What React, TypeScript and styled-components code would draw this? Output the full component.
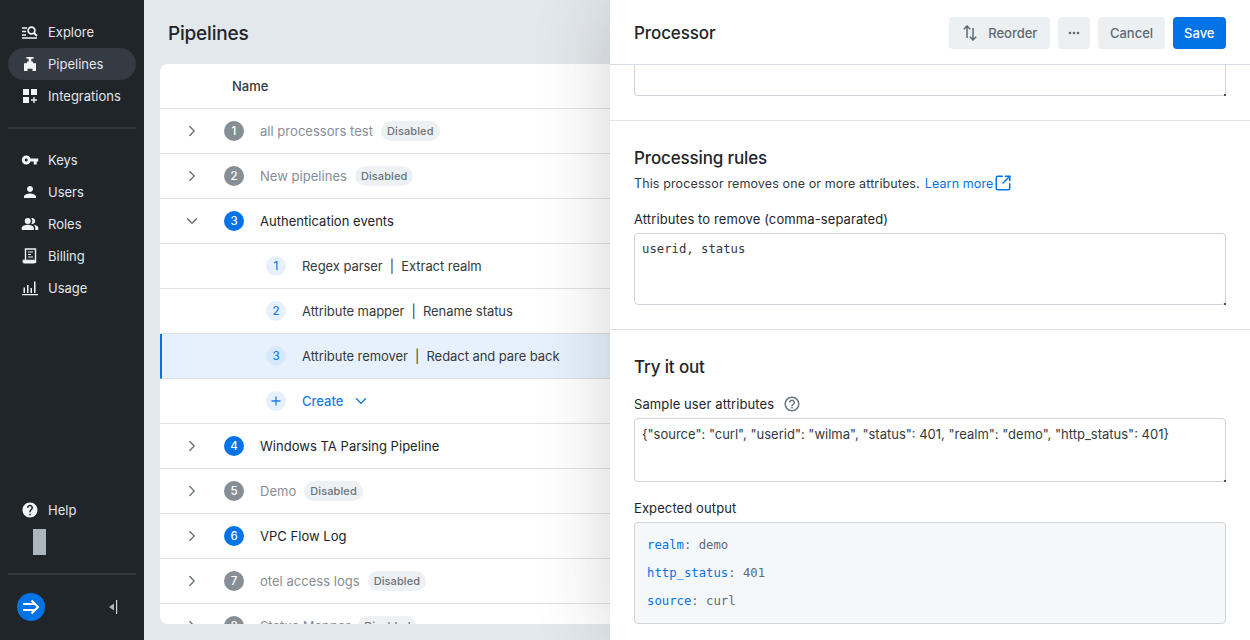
import React from "react";
import styled, { createGlobalStyle } from "styled-components";
import { ChevronDown, ChevronRight, Plus, SquareArrowOutUpRight } from "lucide-react";
import { MdHelp, MdHelpOutline, MdPeopleAlt, MdPerson, MdVpnKey } from "react-icons/md";

const GlobalStyle = createGlobalStyle`
  html, body {
    margin: 0;
    height: 640px;
    overflow: hidden;
    font-family: Inter, "Liberation Sans", sans-serif;
    -webkit-font-smoothing: antialiased;
  }
  * { box-sizing: border-box; }
`;

const Page = styled.div`
  display: flex;
  position: relative;
  width: 1250px;
  height: 640px;
  overflow: hidden;
  background: #e3e8ec;
`;

/* sidebar */
const Sidebar = styled.nav`
  display: flex;
  flex-direction: column;
  flex: 0 0 144px;
  padding: 16px 8px 0;
  background: #202529;
`;

const NavGroup = styled.div`
  display: flex;
  flex-direction: column;
`;

const NavItem = styled.div<{ $active?: boolean }>`
  display: flex;
  align-items: center;
  gap: 9px;
  height: 32px;
  padding-left: 13px;
  border-radius: 16px;
  font-size: 13px;
  color: #e3e6e9;
  background: ${(p) => (p.$active ? "#343b42" : "transparent")};
  svg {
    flex: 0 0 18px;
    width: 18px;
    height: 18px;
    color: #f1f3f5;
  }
`;

const NavDivider = styled.div`
  height: 2px;
  margin: 15px 0;
  background: #32383e;
`;

const Spacer = styled.div`
  flex: 1;
`;

const RedactedBlock = styled.div`
  width: 13px;
  height: 26px;
  margin: 3px 0 3px 25px;
  background: #adb5bd;
`;

const SidebarFooter = styled.div`
  display: flex;
  align-items: center;
  justify-content: space-between;
  height: 34px;
  margin-bottom: 16px;
  padding: 0 18px 0 9px;
`;

const LogoBadge = styled.div`
  display: flex;
  align-items: center;
  justify-content: center;
  width: 28px;
  height: 28px;
  border-radius: 50%;
  background: #0073e6;
`;

/* pipelines list */
const Main = styled.main`
  display: flex;
  flex-direction: column;
  flex: 1;
  min-width: 0;
  padding: 0 0 16px 16px;
`;

const PageTitle = styled.h1`
  display: flex;
  align-items: center;
  height: 64px;
  margin: 0;
  padding: 2px 0 0 8px;
  font-size: 19px;
  font-weight: 500;
  letter-spacing: -0.2px;
  color: #212529;
`;

const TableCard = styled.div`
  flex: 1;
  overflow: hidden;
  border-radius: 8px 0 0 8px;
  background: #fff;
`;

const HeaderRow = styled.div`
  display: flex;
  align-items: center;
  height: 45px;
  padding-left: 72px;
  border-bottom: 1px solid #dee2e9;
  font-size: 13px;
  font-weight: 500;
  color: #343a40;
`;

const Row = styled.div<{ $selected?: boolean }>`
  display: flex;
  align-items: center;
  height: 45px;
  padding-left: ${(p) => (p.$selected ? "18px" : "20px")};
  border-bottom: 1px solid #dee2e6;
  border-left: ${(p) => (p.$selected ? "2px solid #0073e6" : "0")};
  background: ${(p) => (p.$selected ? "#e7f1fd" : "#fff")};
`;

const ExpandSlot = styled.div`
  display: flex;
  align-items: center;
  justify-content: center;
  flex: 0 0 24px;
  margin-right: 20px;
  color: #6a737c;
  svg {
    width: 18px;
    height: 18px;
  }
`;

const OrderBadge = styled.div<{ $enabled: boolean }>`
  display: flex;
  align-items: center;
  justify-content: center;
  flex: 0 0 20px;
  height: 20px;
  margin-right: 16px;
  border-radius: 50%;
  font-size: 11.5px;
  font-weight: 500;
  color: #fff;
  background: ${(p) => (p.$enabled ? "#0073e6" : "#868e96")};
`;

const ChildBadge = styled.div`
  display: flex;
  align-items: center;
  justify-content: center;
  flex: 0 0 20px;
  height: 20px;
  margin: 0 16px 0 86px;
  border-radius: 50%;
  font-size: 11.5px;
  font-weight: 500;
  color: #1c7de8;
  background: #e7f1fd;
  svg {
    width: 14px;
    height: 14px;
  }
`;

const SelectedBadge = styled(ChildBadge)`
  background: #d7e8fc;
`;

const RowName = styled.span<{ $muted?: boolean }>`
  font-size: 13px;
  letter-spacing: 0.03px;
  white-space: nowrap;
  color: ${(p) => (p.$muted ? "#868e96" : "#212529")};
`;

const ChildName = styled(RowName)`
  letter-spacing: -0.06px;
  color: #343a40;
`;

const DisabledTag = styled.span`
  display: inline-flex;
  align-items: center;
  height: 20px;
  margin-left: 8px;
  padding: 0 6px;
  border-radius: 10px;
  font-size: 11px;
  font-weight: 500;
  letter-spacing: 0.1px;
  color: #6a737c;
  background: #eef1f4;
`;

const CreateLink = styled.span`
  display: inline-flex;
  align-items: center;
  gap: 9px;
  font-size: 13px;
  font-weight: 500;
  color: #1c7de8;
  svg {
    width: 18px;
    height: 18px;
  }
`;

/* processor drawer, lies over the table */
const Drawer = styled.aside`
  position: absolute;
  top: 0;
  right: 0;
  bottom: 0;
  display: flex;
  flex-direction: column;
  width: 640px;
  background: #fff;
  box-shadow: 0 0 72px rgba(33, 37, 41, 0.2);
`;

const DrawerHeader = styled.header`
  display: flex;
  align-items: center;
  flex: 0 0 65px;
  gap: 8px;
  padding: 1px 24px 0;
  border-bottom: 1px solid #d6dde6;
`;

const DrawerTitle = styled.h2`
  flex: 1;
  margin: 0;
  font-size: 17px;
  font-weight: 500;
  letter-spacing: -0.1px;
  color: #212529;
`;

const Button = styled.button<{ $primary?: boolean }>`
  display: inline-flex;
  align-items: center;
  justify-content: center;
  height: 32px;
  padding: 0 11.5px;
  border: 0;
  border-radius: 4px;
  font-family: inherit;
  font-size: 13px;
  font-weight: 500;
  color: ${(p) => (p.$primary ? "#fff" : "#5f6a74")};
  background: ${(p) => (p.$primary ? "#0073e6" : "#edf0f3")};
`;

const ReorderButton = styled(Button)`
  gap: 11px;
  padding: 0 13px 0 14px;
`;

const IconButton = styled(Button)`
  width: 32px;
  padding: 0;
`;

const ClippedField = styled.div`
  position: relative;
  flex: 0 0 31px;
  margin: 0 24px 24px;
  border: 1px solid #ced4da;
  border-top: 0;
  border-radius: 0 0 4px 4px;
`;

const Section = styled.section`
  display: flex;
  flex-direction: column;
  padding: 24px;
  border-top: 1px solid #dee2e6;
`;

const SectionTitle = styled.h3`
  margin: 0;
  font-size: 17px;
  line-height: 26px;
  font-weight: 500;
  letter-spacing: -0.14px;
  color: #212529;
`;

const SectionText = styled.p`
  display: flex;
  align-items: center;
  height: 20px;
  margin: 2px 0 0;
  font-size: 12.5px;
  letter-spacing: 0.12px;
  color: #343a40;
`;

const TextLink = styled.a`
  display: inline-flex;
  align-items: center;
  gap: 1px;
  margin-left: 5px;
  color: #0073e6;
  svg {
    width: 18px;
    height: 18px;
  }
`;

const FieldLabel = styled.label<{ $top: number }>`
  display: flex;
  align-items: center;
  gap: 9px;
  height: 20px;
  margin: ${(p) => p.$top}px 0 4px;
  font-size: 13px;
  font-weight: 400;
  letter-spacing: 0.1px;
  color: #212529;
  svg {
    width: 18px;
    height: 18px;
    color: #6a737c;
  }
`;

const TextBox = styled.div<{ $height: number; $mono?: boolean }>`
  position: relative;
  height: ${(p) => p.$height}px;
  padding: 6px 7px;
  border: 1px solid #ced4da;
  border-radius: 4px;
  font-family: ${(p) => (p.$mono ? '"DejaVu Sans Mono", monospace' : "inherit")};
  font-size: ${(p) => (p.$mono ? "12.25px" : "13px")};
  line-height: 18px;
  color: #343a40;
  white-space: nowrap;
`;

const ResizeGrip = styled.span`
  position: absolute;
  right: -1px;
  bottom: -1px;
  width: 2px;
  height: 2px;
  background: #495057;
`;

const OutputBox = styled.div`
  display: flex;
  flex-direction: column;
  gap: 10px;
  height: 102px;
  padding: 13px 12px;
  border: 1px solid #ced4da;
  border-radius: 4px;
  background: #f5f8fa;
  font-family: "DejaVu Sans Mono", monospace;
  font-size: 12.25px;
  line-height: 18px;
  color: #5f6a74;
`;

const OutputKey = styled.span`
  color: #0073e6;
`;

const ExploreIcon = () => (
  <svg viewBox="0 0 18 18" fill="none" stroke="currentColor">
    <path d="M1 5h5M1 8.500h4M1 12h4M1 15h15" strokeWidth="1.400" />
    <circle cx="10.500" cy="7.500" r="3.400" strokeWidth="1.800" />
    <path d="M13 10l3 3" strokeWidth="2" />
  </svg>
);

const PipelineIcon = () => (
  <svg viewBox="0 0 18 18" fill="currentColor">
    <path d="M5.500 2h7v1.800h-2.200V6.500h1.400l.8 1.800h2.500V16H11.500v-2.200h-5V16H3V8.300h2.500l.8-1.800h1.400V3.800H5.500z" />
  </svg>
);

const IntegrationsIcon = () => (
  <svg viewBox="0 0 18 18" fill="currentColor">
    <path d="M2 2h6v6H2zM10 2h6v6h-6zM2 10h6v6H2zM12.300 10h1.400v2.300H16v1.400h-2.300V16h-1.400v-2.300H10v-1.400h2.300z" />
  </svg>
);

const BillingIcon = () => (
  <svg viewBox="0 0 18 18" fill="none" stroke="currentColor">
    <path d="M4.500 13V2h10v14" strokeWidth="1.400" />
    <path d="M7 5h5M7 7.500h3M7 10h5" strokeWidth="1.200" />
    <path d="M2 13.200h11.500V16H3a1 1 0 0 1-1-1z" fill="currentColor" strokeWidth="1" />
  </svg>
);

const UsageIcon = () => (
  <svg viewBox="0 0 18 18" fill="currentColor">
    <path d="M1 15h16v1.300H1zM2.500 8.500h1.500V14H2.500zM6 6h1.500v8H6zM9.500 9h1.500v5H9.500zM13 2.500h1.500V14H13z" />
  </svg>
);

const CollapseIcon = () => (
  <svg width="10" height="16" viewBox="0 0 10 16" fill="#adb5bd">
    <path d="M6 4.500v7L1 8z" />
    <path d="M8 1h1.200v14H8z" fill="#ced4da" />
  </svg>
);

const ArrowRightLogo = () => (
  <svg width="18" height="18" viewBox="0 0 18 18" fill="none" stroke="#fff" strokeWidth="2">
    <path d="M1 6h13M1 12h13M9.500 2.500L16 9l-6.500 6.500" />
  </svg>
);

const ReorderIcon = () => (
  <svg width="14" height="16" viewBox="0 0 14 16" fill="none" stroke="#5f6a74" strokeWidth="1.500">
    <path d="M4 13V1M.8 4.200L4 1l3.200 3.200" />
    <path d="M10 3v12M6.800 11.800L10 15l3.200-3.200" />
  </svg>
);

const DotsIcon = () => (
  <svg width="12" height="4" viewBox="0 0 12 4" fill="#5f6a74">
    <circle cx="2" cy="2" r="1.300" />
    <circle cx="6" cy="2" r="1.300" />
    <circle cx="10" cy="2" r="1.300" />
  </svg>
);

const pipelinesBefore = [
  { n: 1, name: "all processors test", disabled: true },
  { n: 2, name: "New pipelines", disabled: true },
];

const pipelinesAfter = [
  { n: 4, name: "Windows TA Parsing Pipeline", disabled: false },
  { n: 5, name: "Demo", disabled: true },
  { n: 6, name: "VPC Flow Log", disabled: false },
  { n: 7, name: "otel access logs", disabled: true },
  { n: 8, name: "Status Mapper", disabled: true },
];

const PipelineRow: React.FC<{ n: number; name: string; disabled: boolean }> = ({ n, name, disabled }) => (
  <Row>
    <ExpandSlot>
      <ChevronRight strokeWidth={1.8} />
    </ExpandSlot>
    <OrderBadge $enabled={!disabled}>{n}</OrderBadge>
    <RowName $muted={disabled}>{name}</RowName>
    {disabled && <DisabledTag>Disabled</DisabledTag>}
  </Row>
);

const App: React.FC = () => (
  <Page>
    <GlobalStyle />
    <Sidebar>
      <NavGroup>
        <NavItem><ExploreIcon />Explore</NavItem>
        <NavItem $active><PipelineIcon />Pipelines</NavItem>
        <NavItem><IntegrationsIcon />Integrations</NavItem>
      </NavGroup>
      <NavDivider />
      <NavGroup>
        <NavItem><MdVpnKey />Keys</NavItem>
        <NavItem><MdPerson />Users</NavItem>
        <NavItem><MdPeopleAlt />Roles</NavItem>
        <NavItem><BillingIcon />Billing</NavItem>
        <NavItem><UsageIcon />Usage</NavItem>
      </NavGroup>
      <Spacer />
      <NavItem><MdHelp />Help</NavItem>
      <RedactedBlock />
      <NavDivider />
      <SidebarFooter>
        <LogoBadge><ArrowRightLogo /></LogoBadge>
        <CollapseIcon />
      </SidebarFooter>
    </Sidebar>
    <Main>
      <PageTitle>Pipelines</PageTitle>
      <TableCard>
        <HeaderRow>Name</HeaderRow>
        {pipelinesBefore.map((p) => <PipelineRow key={p.n} {...p} />)}
        <Row>
          <ExpandSlot><ChevronDown strokeWidth={1.8} /></ExpandSlot>
          <OrderBadge $enabled>3</OrderBadge>
          <RowName>Authentication events</RowName>
        </Row>
        <Row>
          <ChildBadge>1</ChildBadge>
          <ChildName>Regex parser&nbsp; |&nbsp; Extract realm</ChildName>
        </Row>
        <Row>
          <ChildBadge>2</ChildBadge>
          <ChildName>Attribute mapper&nbsp; |&nbsp; Rename status</ChildName>
        </Row>
        <Row $selected>
          <SelectedBadge>3</SelectedBadge>
          <ChildName>Attribute remover&nbsp; |&nbsp; Redact and pare back</ChildName>
        </Row>
        <Row>
          <ChildBadge><Plus strokeWidth={2.2} /></ChildBadge>
          <CreateLink>Create <ChevronDown /></CreateLink>
        </Row>
        {pipelinesAfter.map((p) => <PipelineRow key={p.n} {...p} />)}
      </TableCard>
    </Main>
    <Drawer>
      <DrawerHeader>
        <DrawerTitle>Processor</DrawerTitle>
        <ReorderButton><ReorderIcon />Reorder</ReorderButton>
        <IconButton><DotsIcon /></IconButton>
        <Button>Cancel</Button>
        <Button $primary>Save</Button>
      </DrawerHeader>
      <ClippedField><ResizeGrip /></ClippedField>
      <Section>
        <SectionTitle>Processing rules</SectionTitle>
        <SectionText>
          This processor removes one or more attributes.
          <TextLink>Learn more <SquareArrowOutUpRight strokeWidth={2} /></TextLink>
        </SectionText>
        <FieldLabel $top={16}>Attributes to remove (comma-separated)</FieldLabel>
        <TextBox $height={72} $mono>userid, status<ResizeGrip /></TextBox>
      </Section>
      <Section>
        <SectionTitle>Try it out</SectionTitle>
        <FieldLabel $top={14}>Sample user attributes <MdHelpOutline /></FieldLabel>
        <TextBox $height={64}>
          {'{"source": "curl", "userid": "wilma", "status": 401, "realm": "demo", "http_status": 401}'}
          <ResizeGrip />
        </TextBox>
        <FieldLabel $top={16}>Expected output</FieldLabel>
        <OutputBox>
          <div><OutputKey>realm</OutputKey>: demo</div>
          <div><OutputKey>http_status</OutputKey>: 401</div>
          <div><OutputKey>source</OutputKey>: curl</div>
        </OutputBox>
      </Section>
    </Drawer>
  </Page>
);

export default App;
